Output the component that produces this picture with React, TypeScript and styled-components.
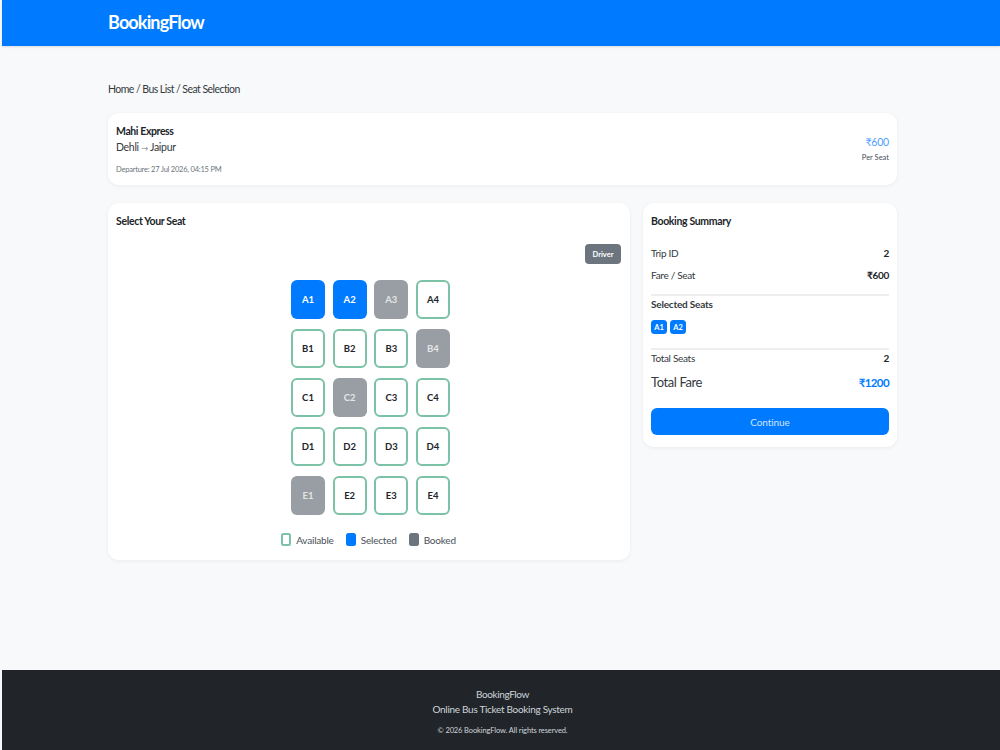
import React from "react";
import styled, { createGlobalStyle } from "styled-components";

const GlobalStyle = createGlobalStyle`
    * {
        box-sizing: border-box;
    }
    html, body {
        margin: 0;
        padding: 0;
        background: #f8f9fa;
    }
    body {
        font-family: "Lato", "Noto Sans", sans-serif;
        color: #212529;
    }
`;

const Page = styled.div`
    min-height: 750px;
    margin-left: 2px;
    display: flex;
    flex-direction: column;
`;

const Header = styled.header`
    height: 46px;
    background: #007bff;
    padding: 0 106px 2px;
    display: flex;
    align-items: center;
    box-shadow: 0 1px 2px rgba(0, 0, 0, 0.12);
`;

const Logo = styled.div`
    color: #fff;
    font-size: 18px;
    font-weight: 700;
    letter-spacing: -0.85px;
`;

const Main = styled.main`
    flex: 1;
    padding: 36px 103px 0 106px;
`;

const Crumbs = styled.div`
    font-size: 10.5px;
    line-height: 14px;
    color: #343a40;
    margin-bottom: 17px;
    letter-spacing: -0.55px;
`;

const Card = styled.section`
    background: #fff;
    border-radius: 11px;
    box-shadow: 0 1px 4px rgba(0, 0, 0, 0.06);
`;

const TripCard = styled(Card)`
    height: 72px;
    padding: 11px 8px 0;
    display: flex;
    justify-content: space-between;
    margin-bottom: 18px;
`;

const TripName = styled.div`
    font-size: 10.5px;
    font-weight: 700;
    line-height: 14px;
    letter-spacing: -0.4px;
`;

const TripRoute = styled.div`
    font-size: 10.5px;
    line-height: 15px;
    margin-top: 2px;
    color: #343a40;
    letter-spacing: -0.3px;
`;

const Arrow = styled.span`
    font-size: 7px;
    color: #6c757d;
`;

const TripTime = styled.div`
    font-size: 7.5px;
    line-height: 11px;
    color: #6c757d;
    margin-top: 8px;
    letter-spacing: -0.22px;
`;

const PriceBox = styled.div`
    text-align: right;
    padding-top: 11px;
`;

const Price = styled.div`
    font-size: 10.5px;
    line-height: 14px;
    color: #4d9fff;
    letter-spacing: -0.2px;
`;

const PerSeat = styled.div`
    font-size: 7.5px;
    line-height: 11px;
    margin-top: 3px;
    color: #495057;
`;

const Columns = styled.div`
    display: grid;
    grid-template-columns: 522px 254px;
    gap: 13px;
    align-items: start;
`;

const SeatCard = styled(Card)`
    height: 357px;
    padding: 11px 9px 0 8px;
`;

const CardTitle = styled.h2`
    margin: 0;
    font-size: 10.5px;
    line-height: 14px;
    font-weight: 700;
    letter-spacing: -0.35px;
`;

const DriverRow = styled.div`
    display: flex;
    justify-content: flex-end;
    margin-top: 16px;
    margin-bottom: 16px;
`;

const Driver = styled.span`
    width: 36px;
    height: 20px;
    border-radius: 4px;
    background: #6c757d;
    color: #fff;
    font-size: 7.5px;
    font-weight: 700;
    display: flex;
    align-items: center;
    justify-content: center;
`;

const SeatGrid = styled.div`
    width: 159px;
    margin-left: 175px;
    display: grid;
    grid-template-columns: repeat(4, 34px);
    grid-auto-rows: 39px;
    justify-content: space-between;
    row-gap: 10px;
`;

const Seat = styled.div<{ $state: "available" | "selected" | "booked" }>`
    border-radius: 6px;
    display: flex;
    align-items: center;
    justify-content: center;
    font-size: 9.5px;
    font-weight: 700;
    color: ${(p) => (p.$state === "available" ? "#212529" : p.$state === "booked" ? "#e4e6e8" : "#fff")};
    background: ${(p) =>
        p.$state === "selected" ? "#007bff" : p.$state === "booked" ? "#989ea3" : "#fff"};
    border: ${(p) => (p.$state === "available" ? "2px solid #7cc2a6" : "none")};
`;

const Legend = styled.div`
    display: flex;
    justify-content: center;
    gap: 12px;
    margin-top: 18px;
    font-size: 10px;
    letter-spacing: -0.2px;
    color: #495057;
`;

const LegendItem = styled.div`
    display: flex;
    align-items: center;
    gap: 5px;
`;

const Swatch = styled.span<{ $bg: string; $border?: string }>`
    width: 10px;
    height: 13px;
    border-radius: 2.5px;
    background: ${(p) => p.$bg};
    border: ${(p) => (p.$border ? `2px solid ${p.$border}` : "none")};
`;

const SummaryCard = styled(Card)`
    height: 244px;
    padding: 11px 8px 0;
`;

const SummaryTitle = styled(CardTitle)`
    margin-bottom: 14px;
`;

const Row = styled.div`
    display: flex;
    justify-content: space-between;
    align-items: center;
    height: 22px;
    font-size: 10px;
    letter-spacing: -0.3px;
    color: #343a40;
`;

const Strong = styled.strong`
    font-weight: 700;
    color: #212529;
`;

const Line = styled.hr<{ $gap?: number }>`
    border: none;
    border-top: 2px solid #eceef0;
    margin: ${(p) => p.$gap ?? 0}px 0 0;
`;

const SubTitle = styled.div`
    font-size: 10px;
    font-weight: 700;
    line-height: 14px;
    margin-top: 1px;
    letter-spacing: -0.2px;
    color: #343a40;
`;

const Chips = styled.div`
    display: flex;
    gap: 3px;
    margin-top: 9px;
    margin-bottom: 14px;
`;

const Chip = styled.span`
    width: 16px;
    height: 14px;
    border-radius: 3.5px;
    background: #007bff;
    color: #fff;
    font-size: 7.5px;
    font-weight: 700;
    display: flex;
    align-items: center;
    justify-content: center;
`;

const TotalSeats = styled(Row)`
    height: 16px;
`;

const TotalFare = styled(Row)`
    height: 30px;
    margin-top: 1px;
    font-size: 13px;
    letter-spacing: -0.4px;
`;

const FareValue = styled.strong`
    color: #007bff;
    font-weight: 700;
    font-size: 11.5px;
    letter-spacing: -0.6px;
`;

const ContinueButton = styled.button`
    width: 100%;
    height: 27px;
    margin-top: 11px;
    border: none;
    border-radius: 6px;
    background: #007bff;
    color: #cfe4ff;
    font-family: inherit;
    font-size: 10px;
    letter-spacing: -0.1px;
`;

const Footer = styled.footer`
    height: 80px;
    background: #212529;
    color: #ced4da;
    text-align: center;
    padding: 17px 0 0 3px;
    font-size: 10px;
    line-height: 14.5px;
`;

const FooterBrand = styled.div`
    letter-spacing: -0.4px;
`;

const FooterTagline = styled.div`
    letter-spacing: -0.3px;
`;

const Copyright = styled.div`
    font-size: 7.5px;
    line-height: 11px;
    margin-top: 9px;
    letter-spacing: -0.12px;
`;

const rows = ["A", "B", "C", "D", "E"];
const selected = ["A1", "A2"];
const booked = ["A3", "B4", "C2", "E1"];

const seatState = (seat: string) => {
    if (selected.includes(seat)) return "selected";
    if (booked.includes(seat)) return "booked";
    return "available";
};

const App = () => {
    return (
        <Page>
            <GlobalStyle />
            <Header>
                <Logo>BookingFlow</Logo>
            </Header>
            <Main>
                <Crumbs>Home / Bus List / Seat Selection</Crumbs>
                <TripCard>
                    <div>
                        <TripName>Mahi Express</TripName>
                        <TripRoute>
                            Dehli <Arrow>→</Arrow> Jaipur
                        </TripRoute>
                        <TripTime>Departure: 27 Jul 2026, 04:15 PM</TripTime>
                    </div>
                    <PriceBox>
                        <Price>₹600</Price>
                        <PerSeat>Per Seat</PerSeat>
                    </PriceBox>
                </TripCard>
                <Columns>
                    <SeatCard>
                        <CardTitle>Select Your Seat</CardTitle>
                        <DriverRow>
                            <Driver>Driver</Driver>
                        </DriverRow>
                        <SeatGrid>
                            {rows.map((r) =>
                                [1, 2, 3, 4].map((n) => (
                                    <Seat key={r + n} $state={seatState(r + n)}>
                                        {r + n}
                                    </Seat>
                                ))
                            )}
                        </SeatGrid>
                        <Legend>
                            <LegendItem>
                                <Swatch $bg="#fff" $border="#7cc2a6" />
                                Available
                            </LegendItem>
                            <LegendItem>
                                <Swatch $bg="#007bff" />
                                Selected
                            </LegendItem>
                            <LegendItem>
                                <Swatch $bg="#6c757d" />
                                Booked
                            </LegendItem>
                        </Legend>
                    </SeatCard>
                    <SummaryCard>
                        <SummaryTitle>Booking Summary</SummaryTitle>
                        <Row>
                            Trip ID <Strong>2</Strong>
                        </Row>
                        <Row>
                            Fare / Seat <Strong>₹600</Strong>
                        </Row>
                        <Line $gap={8} />
                        <SubTitle>Selected Seats</SubTitle>
                        <Chips>
                            <Chip>A1</Chip>
                            <Chip>A2</Chip>
                        </Chips>
                        <Line />
                        <TotalSeats>
                            Total Seats <Strong>2</Strong>
                        </TotalSeats>
                        <TotalFare>
                            Total Fare <FareValue>₹1200</FareValue>
                        </TotalFare>
                        <ContinueButton>Continue</ContinueButton>
                    </SummaryCard>
                </Columns>
            </Main>
            <Footer>
                <FooterBrand>BookingFlow</FooterBrand>
                <FooterTagline>Online Bus Ticket Booking System</FooterTagline>
                <Copyright>© 2026 BookingFlow. All rights reserved.</Copyright>
            </Footer>
        </Page>
    );
};

export default App;
